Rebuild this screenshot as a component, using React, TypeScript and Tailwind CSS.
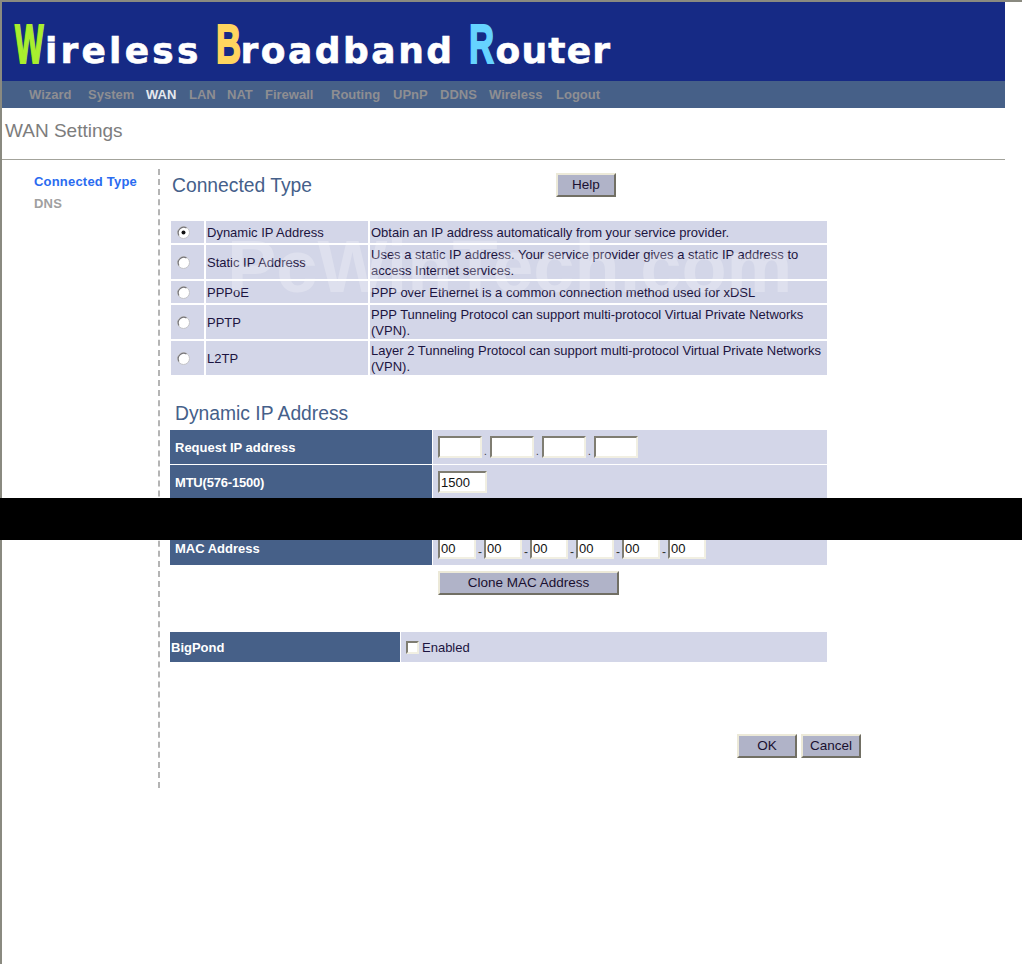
import React from "react";

const navItems = [
  { n: "Wizard", w: "w-[59px]" },
  { n: "System", w: "w-[58px]" },
  { n: "WAN", w: "w-[43px]" },
  { n: "LAN", w: "w-[38px]" },
  { n: "NAT", w: "w-[38px]" },
  { n: "Firewall", w: "w-[66px]" },
  { n: "Routing", w: "w-[62px]" },
  { n: "UPnP", w: "w-[47px]" },
  { n: "DDNS", w: "w-[49px]" },
  { n: "Wireless", w: "w-[67px]" },
  { n: "Logout", w: "w-[50px]" },
];

const rows = [
  { name: "Dynamic IP Address", desc: "Obtain an IP address automatically from your service provider.", h: "h-[22px]", on: true },
  { name: "Static IP Address", desc: "Uses a static IP address. Your service provider gives a static IP address to access Internet services.", h: "h-[34px]" },
  { name: "PPPoE", desc: "PPP over Ethernet is a common connection method used for xDSL", h: "h-[22px]" },
  { name: "PPTP", desc: "PPP Tunneling Protocol can support multi-protocol Virtual Private Networks (VPN).", h: "h-[34px]" },
  { name: "L2TP", desc: "Layer 2 Tunneling Protocol can support multi-protocol Virtual Private Networks (VPN).", h: "h-[34px]" },
];

const field =
  "h-[22px] bg-white border-2 border-t-[#7f7d72] border-l-[#7f7d72] border-b-[#f1efe2] border-r-[#f1efe2] pl-px text-[13px] leading-none text-[#111] outline-none";
const btn =
  "h-[24px] pb-px bg-[#b0b3c8] border-2 border-t-[#ece9d8] border-l-[#ece9d8] border-b-[#716f64] border-r-[#716f64] text-[13.5px] leading-none text-[#1a1030]";
const label = "w-[262px] bg-[#466088] text-white font-bold flex items-center pt-[2px]";

function Radio({ on }: { on?: boolean }) {
  return (
    <svg width="13" height="13" viewBox="0 0 13 13">
      <circle cx="6.5" cy="6.5" r="6" fill="#fff" stroke="#c4c4c8" />
      <path d="M2 9.5A5.5 5.5 0 0 1 9.5 2" fill="none" stroke="#77767a" strokeWidth="1.2" />
      {on && <circle cx="6.5" cy="6.5" r="2" fill="#111" />}
    </svg>
  );
}

function Initial({ c, cls }: { c: string; cls: string }) {
  return (
    <span className={`inline-block font-['Liberation_Sans',Arial,sans-serif] text-[56px] leading-none tracking-normal origin-left [-webkit-text-stroke:2px_currentColor] ${cls}`}>{c}</span>
  );
}

export default function App() {
  return (
    <div className="relative h-[964px] bg-white border-l-2 border-t-2 border-[#8a8a80] font-['Liberation_Sans',Arial,sans-serif]">
      <div className="w-[1003px]">
        <header className="h-[79px] bg-[#162a85] flex items-baseline pl-[13px] pt-[14px] font-['DejaVu_Sans',sans-serif] font-bold text-white text-[36px] leading-none [-webkit-text-stroke:0.6px_#ffffff] overflow-hidden">
          <Initial c="W" cls="text-[#a9ee2e] w-[30px] scale-x-[0.54]" />
          <span className="tracking-[3.2px]">ireless</span>
          <Initial c="B" cls="text-[#ffd55f] w-[25px] ml-[14px] scale-x-[0.62]" />
          <span className="tracking-[2.5px]">roadband</span>
          <Initial c="R" cls="text-[#66d3ff] w-[27px] ml-[14px] scale-x-[0.62]" />
          <span className="tracking-[1.2px]">outer</span>
        </header>
        <nav className="h-[27px] bg-[#466088] flex items-center pl-[27px] text-[13px] font-bold text-[#8e8e92]">
          {navItems.map((i) => (
            <span key={i.n} className={`${i.w} ${i.n === "WAN" ? "text-[#e6e8ee]" : ""}`}>{i.n}</span>
          ))}
        </nav>
        <div className="h-[52px] border-b border-[#a3a39b] pl-[3px] pt-[11px] text-[19px] leading-[24px] text-[#7d7d7d]">
          WAN Settings
        </div>
      </div>

      <main className="flex mt-[9px]">
        <aside className="w-[156px] shrink-0 pl-[32px] pt-[2px] text-[13px] tracking-[0.2px] font-bold leading-[22px]">
          <div className="text-[#2a6bf0]">Connected Type</div>
          <div className="text-[#a0a0a0]">DNS</div>
        </aside>
        <section className="relative h-[619px] w-[720px] border-l-2 border-dashed border-[#b4b4b4] pl-[10px]">
          <div className="flex h-[52px]">
            <h1 className="w-[386px] pl-[2px] pt-[5px] text-[19.3px] leading-[24px] text-[#45608a]">Connected Type</h1>
            <button className={`${btn} w-[60px] mt-[4px]`}>Help</button>
          </div>

          <div className="ml-px grid grid-cols-[33px_162px_457px] gap-[2px] text-[13px] leading-[16px] text-[#1c1440]">
            {rows.map((r) => (
              <React.Fragment key={r.name}>
                <div className={`${r.h} bg-[#d3d6e8] flex items-center justify-center pr-[8px]`}><Radio on={r.on} /></div>
                <div className={`${r.h} bg-[#d3d6e8] flex items-center pl-px pt-[2px]`}>{r.name}</div>
                <div className={`${r.h} bg-[#d3d6e8] flex items-center pl-px pr-[4px] pt-[2px]`}>{r.desc}</div>
              </React.Fragment>
            ))}
          </div>

          <h2 className="pl-[5px] mt-[27px] text-[19.3px] leading-[24px] text-[#45608a]">Dynamic IP Address</h2>

          <div className="mt-[4px] w-[657px] flex flex-col gap-px text-[13px]">
            <div className="flex h-[34px]">
              <div className={`${label} pl-[5px]`}>Request IP address</div>
              <div className="flex-1 ml-px bg-[#d3d6e8] flex items-center pl-[5px] gap-[2px]">
                {[0, 1, 2, 3].map((i) => (
                  <React.Fragment key={i}>
                    {i > 0 && <span className="w-[4px] text-[10px] leading-none self-end mb-[7px] text-[#333]">.</span>}
                    <input className={`${field} w-[44px]`} defaultValue="" />
                  </React.Fragment>
                ))}
              </div>
            </div>
            <div className="flex h-[34px]">
              <div className={`${label} pl-[5px] tracking-[-0.2px]`}>MTU(576-1500)</div>
              <div className="flex-1 ml-px bg-[#d3d6e8] flex items-center pl-[5px]">
                <input className={`${field} w-[49px]`} defaultValue="1500" />
              </div>
            </div>
            <div className="flex h-[30px]">
              <div className="w-[262px] bg-[#466088]" />
              <div className="flex-1 ml-px bg-[#d3d6e8]" />
            </div>
            <div className="flex h-[34px]">
              <div className={`${label} pl-[5px]`}>MAC Address</div>
              <div className="flex-1 ml-px bg-[#d3d6e8] flex items-center pl-[5px] gap-[2px]">
                {[0, 1, 2, 3, 4, 5].map((i) => (
                  <React.Fragment key={i}>
                    {i > 0 && <span className="w-[4px] text-[12px] leading-none self-end mb-[7px] text-[#333]">-</span>}
                    <input className={`${field} w-[38px]`} defaultValue="00" />
                  </React.Fragment>
                ))}
              </div>
            </div>
          </div>

          <button className={`${btn} text-[13.3px] w-[181px] ml-[268px] mt-[6px] block`}>Clone MAC Address</button>

          <div className="mt-[37px] w-[657px] flex h-[30px] text-[13px]">
            <div className="w-[230px] bg-[#466088] text-white font-bold flex items-center pl-px pt-[2px]">BigPond</div>
            <div className="flex-1 ml-px bg-[#d3d6e8] flex items-center pl-[5px] text-[#1c1440]">
              <input type="checkbox" className="appearance-none w-[13px] h-[13px] bg-white border-2 border-t-[#7f7d72] border-l-[#7f7d72] border-b-[#f1efe2] border-r-[#f1efe2]" />
              <span className="ml-[3px] mt-[2px]">Enabled</span>
            </div>
          </div>

          <div className="flex gap-[4px] ml-[567px] mt-[72px]">
            <button className={`${btn} w-[60px]`}>OK</button>
            <button className={`${btn} w-[60px]`}>Cancel</button>
          </div>

          <div className="absolute left-[67px] top-[58px] text-[74px] leading-[80px] font-bold text-white/25 whitespace-nowrap pointer-events-none">
            PcWinTech.com
          </div>
        </section>
      </main>

      <div className="absolute left-[-2px] right-0 top-[496px] h-[42px] bg-black" />
    </div>
  );
}
